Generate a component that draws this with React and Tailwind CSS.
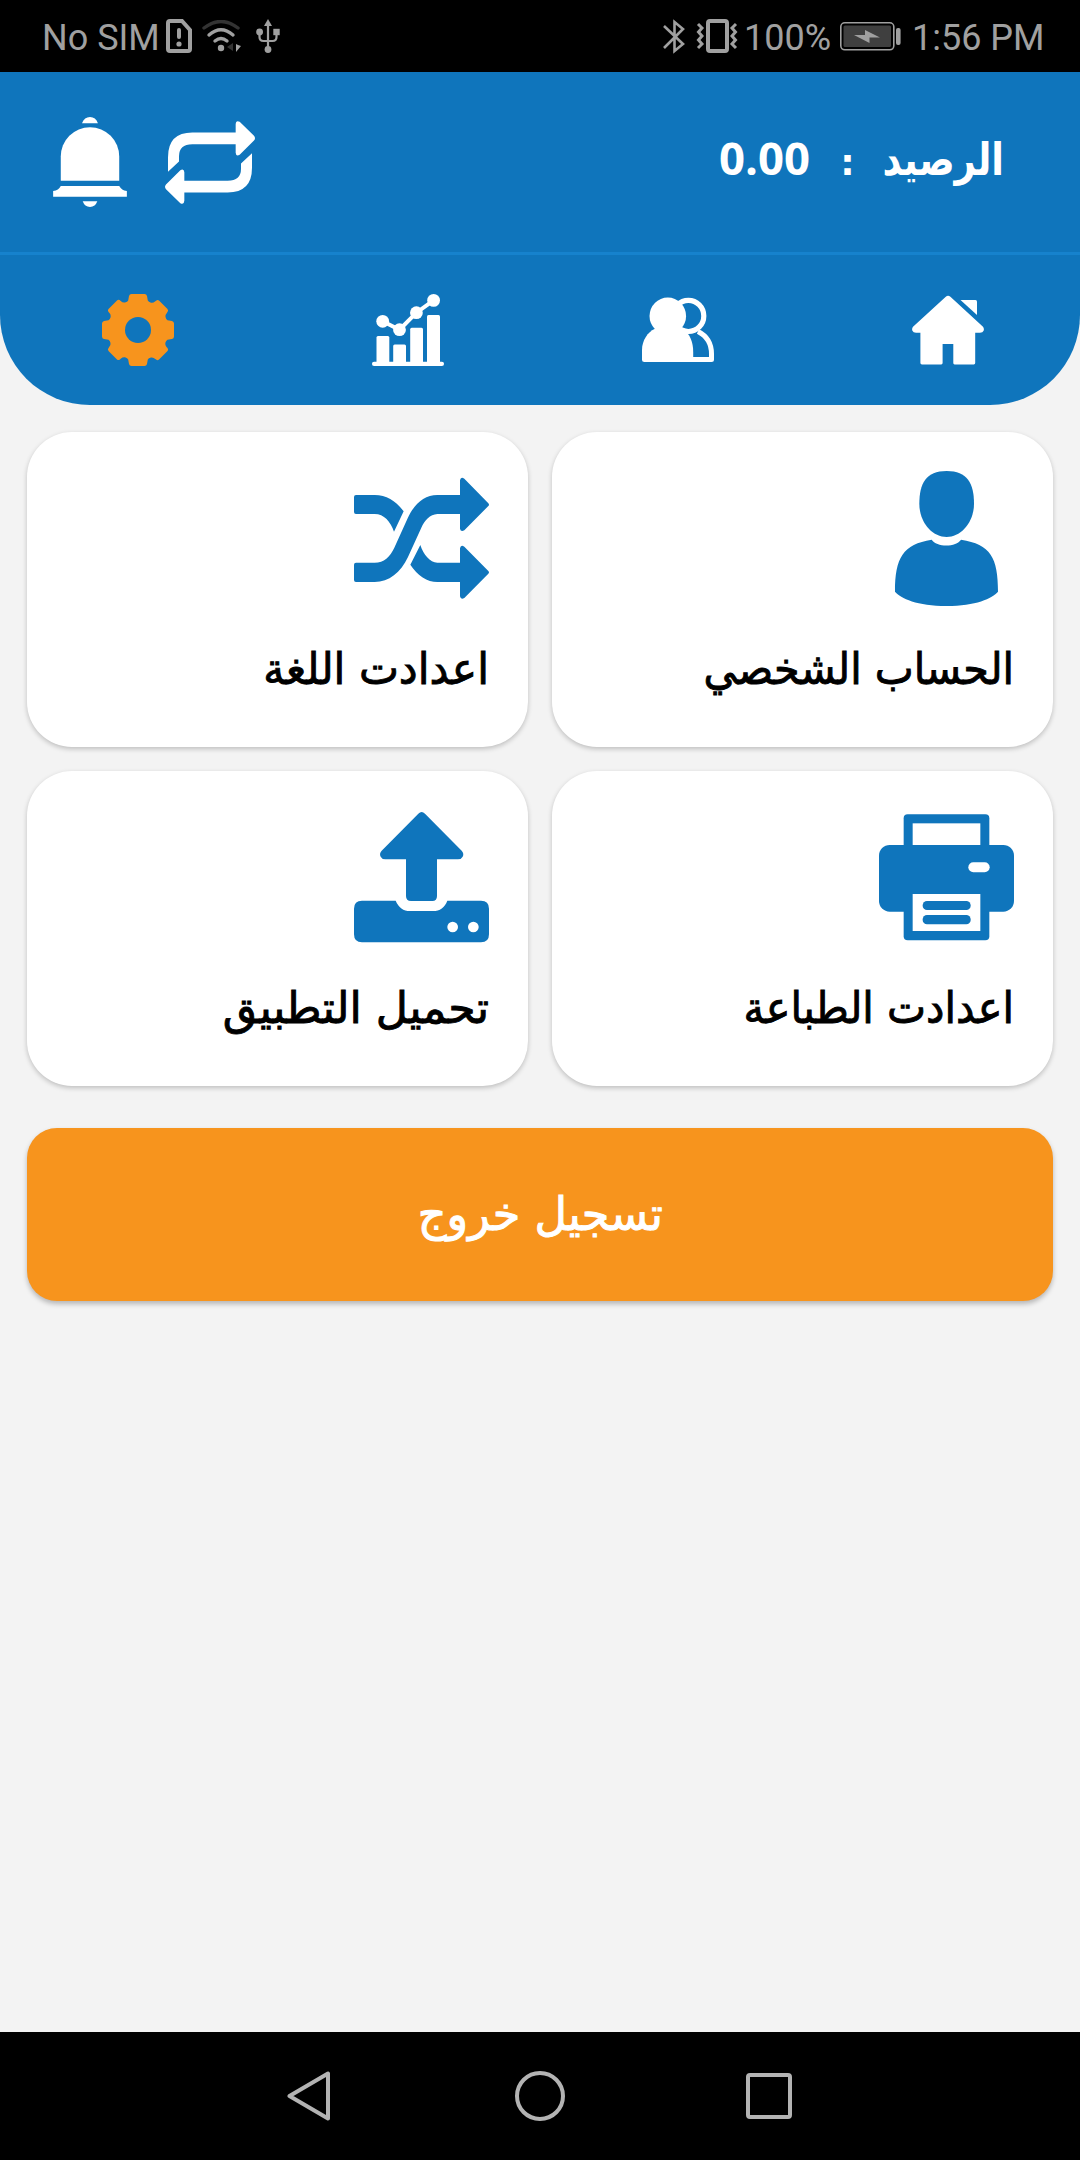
import React from "react";

function BellIcon() {
  return (
    <svg className="w-[74px] h-[90px]" viewBox="0 0 222 271" fill="currentColor">
      <path d="M87 19 Q94 0 111 0 Q128 0 135 19 Z" />
      <path d="M23 192 V119 A88 88 0 0 1 199 119 V192 Z" />
      <path d="M23 208 H199 C205 217 210 222 222 223 V240 H0 V223 C12 222 18 217 23 208 Z" />
      <path d="M89 254 H133 Q127 271 111 271 Q95 271 89 254 Z" />
    </svg>
  );
}

function RepeatIcon() {
  const arrow =
    "M9 152 V108 Q9 34 82 34 H212 V9 Q213 -4 224 2 L267 44 Q273 51 267 58 L224 101 Q213 107 212 95 V69 H82 Q42 69 42 105 V121 Z";
  return (
    <svg className="w-[90px] h-[83px]" viewBox="0 0 270 248" fill="currentColor">
      <path d={arrow} />
      <path d={arrow} transform="rotate(180 135 124)" />
    </svg>
  );
}

function GearIcon() {
  const quarter =
    "M36 36 V0 H42.5 Q44.5 0 45 2 L45.8 6.5 Q46.5 8 49 8.7 Q51.5 9 53 7.5 Q55.3 5 57 6.5 L65.5 15 Q67 16.7 65 18.7 Q63 20.8 63.5 23 Q64 25.5 65.5 26.2 L70 27 Q72 27.5 72 29.5 V36 Z";
  return (
    <svg className="w-[72px] h-[72px]" viewBox="0 0 72 72" fill="currentColor">
      {[0, 90, 180, 270].map((deg) => (
        <path key={deg} d={quarter} transform={`rotate(${deg} 36 36)`} />
      ))}
      <circle cx="36" cy="36" r="13" fill="#0f75bc" />
    </svg>
  );
}

function ChartIcon() {
  return (
    <svg className="w-[72px] h-[72px]" viewBox="0 0 72 72" fill="currentColor">
      <rect x="4.5" y="42" width="12.8" height="28" rx="1.5" />
      <rect x="21.2" y="50.5" width="12.8" height="20" rx="1.5" />
      <rect x="38.2" y="33.7" width="12.8" height="36" rx="1.5" />
      <rect x="55" y="21" width="13" height="49" rx="1.5" />
      <rect x="0" y="67.7" width="72" height="4.3" rx="2.1" />
      <path d="M10.7 27.3 L27.5 35.7 L44.4 18.7 L61.6 6.4" fill="none" stroke="currentColor" strokeWidth="4" />
      <circle cx="10.7" cy="27.3" r="6.4" />
      <circle cx="27.5" cy="35.7" r="6.4" />
      <circle cx="44.4" cy="18.7" r="6.4" />
      <circle cx="61.6" cy="6.4" r="6.4" />
    </svg>
  );
}

function UsersIcon() {
  return (
    <svg className="w-[72px] h-[72px]" viewBox="0 0 72 72" fill="currentColor">
      <ellipse cx="46.4" cy="21.9" rx="15.4" ry="15.6" fill="none" stroke="currentColor" strokeWidth="5.2" />
      <path d="M56 37.5 C65 42 69.5 50 69.5 60 V65.5 H50" fill="none" stroke="currentColor" strokeWidth="5" strokeLinejoin="round" />
      <ellipse cx="25.8" cy="22" rx="18.3" ry="18.4" />
      <path d="M0 65.5 V56 C0 46 6 38 12.5 35 L25 31 L41 35 C48 40 51.2 48 51.2 58 V68 H2.5 Q0 68 0 65.5 Z" />
    </svg>
  );
}

function HomeIcon() {
  return (
    <svg className="w-[72px] h-[72px]" viewBox="0 0 72 72" fill="currentColor">
      <path d="M33.8 2.8 Q36 0.6 38.4 2.8 L71 32.8 Q72.4 34.5 71.6 36.8 Q70.8 38.7 68 38.7 H63.2 V69 Q63.2 70.4 61.8 70.4 H42.6 Q41.3 70.4 41.3 69 V50 H30.6 V69 Q30.6 70.4 29.2 70.4 H10 Q8.4 70.4 8.4 69 V38.7 H4 Q1.2 38.7 0.4 36.8 Q-0.4 34.5 1 32.8 Z" />
      <path d="M48.5 6 H63.5 Q65 6 65 7.5 V21 Z" />
    </svg>
  );
}

function AccountIcon() {
  return (
    <svg className="w-[135px] h-[135px]" viewBox="0 0 405 405" fill="currentColor">
      <path d="M203 0 C265 0 285 38 285 98 C285 155 245 198 203 198 C160 198 121 155 121 98 C121 38 141 0 203 0 Z" />
      <path d="M158 206 C172 229 232 229 246 206 C335 220 357 260 357 362 C340 382 290 405 203 405 C115 405 65 382 48 362 C48 260 72 220 158 206 Z" />
    </svg>
  );
}

function ShuffleIcon() {
  return (
    <svg className="w-[135px] h-[135px]" viewBox="0 0 405 405" fill="currentColor">
      <path d="M0 78 Q0 72 6 72 H62 C98 72 127 91 149 121 L120 182 C110 152 90 129 62 129 H6 Q0 129 0 123 Z" />
      <path d="M0 281 Q0 275 6 275 H62 C90 275 108 258 121 230 L161 142 C180 100 210 72 250 72 H318 V28 Q320 16 331 23 L403 97 Q407 101 403 105 L331 178 Q320 184 318 173 V129 H250 C228 130 212 148 202 170 L162 258 C140 305 105 333 62 333 H6 Q0 333 0 327 Z" />
      <path d="M199 222 C208 250 228 275 250 275 H318 V232 Q320 220 331 227 L403 300 Q407 304 403 308 L331 381 Q320 387 318 376 V333 H250 C220 333 190 313 169 281 Z" />
    </svg>
  );
}

function PrinterIcon() {
  return (
    <svg className="w-[135px] h-[135px]" viewBox="0 0 405 405" fill="currentColor">
      <rect x="74" y="13" width="257" height="378" rx="12" />
      <rect x="101" y="40" width="203" height="65" fill="#fff" />
      <rect x="0" y="105" width="405" height="200" rx="32" />
      <rect x="268" y="157" width="64" height="30" rx="15" fill="#fff" />
      <rect x="101" y="252" width="203" height="111" fill="#fff" />
      <rect x="131" y="273" width="144" height="27" rx="13" />
      <rect x="131" y="315" width="144" height="28" rx="13" />
    </svg>
  );
}

function UploadIcon() {
  return (
    <svg className="w-[135px] h-[135px]" viewBox="0 0 405 405" fill="currentColor">
      <path d="M193 11 Q203 1 213 11 L323 122 Q331 131 326 140 Q322 148 312 148 H249 V258 Q249 273 235 273 H171 Q156 273 156 258 V148 H94 Q84 148 80 140 Q75 131 83 122 Z" />
      <path d="M24 272 H125 C134 293 148 303 168 303 H237 C258 303 272 293 280 272 H381 Q405 272 405 296 V373 Q405 397 381 397 H24 Q0 397 0 373 V296 Q0 272 24 272 Z" />
      <circle cx="296" cy="351" r="16" fill="#fff" />
      <circle cx="358" cy="351" r="16" fill="#fff" />
    </svg>
  );
}

function StatusBar() {
  return (
    <div className="h-[72px] bg-black text-[#a0a0a0] flex items-center justify-between pl-[42px] pr-[36px] font-['Roboto',sans-serif] text-[36px]">
      <div className="flex items-center">
        <span className="w-[124px] whitespace-nowrap leading-[72px] pt-[3px]">No SIM</span>
        <svg className="w-[26px] h-[34px]" viewBox="0 0 26 34" fill="none" stroke="currentColor" strokeWidth="4">
          <path d="M4 2 H16 L24 11 V30 Q24 32 22 32 H4 Q2 32 2 30 V4 Q2 2 4 2 Z" />
          <path d="M13 11 V18" strokeLinecap="round" />
          <circle cx="13" cy="25" r="2.6" fill="currentColor" stroke="none" />
        </svg>
        <svg className="w-[40px] h-[32px] ml-[10px]" viewBox="0 0 40 32" fill="none" stroke="currentColor" strokeWidth="3.4" strokeLinecap="round">
          <path d="M2 8 Q19 -5 36 8" stroke="#333" />
          <path d="M7 15 Q19 4.500 31 15" />
          <path d="M13 21 Q19 16 25 21" />
          <circle cx="19" cy="28" r="3.2" fill="currentColor" stroke="none" />
          <path d="M31 23 V31 L25 27 Z" fill="#333" stroke="none" />
          <path d="M34 24 V32 L39 26 L36 25 Z" fill="currentColor" stroke="none" />
        </svg>
        <svg className="w-[24px] h-[34px] ml-[14px]" viewBox="0 0 24 34" fill="none" stroke="currentColor" strokeWidth="2.2">
          <path d="M12 4 V30 M3.500 13 V18 Q3.500 22 7.500 22 H16.500 Q20.500 22 20.500 18 V13" />
          <path d="M12 0 L16 7 H8 Z" fill="currentColor" stroke="none" />
          <circle cx="3.600" cy="13" r="3.400" fill="currentColor" stroke="none" />
          <rect x="17.300" y="9.800" width="6.400" height="6.400" fill="currentColor" stroke="none" />
          <circle cx="12" cy="30.500" r="3.400" fill="currentColor" stroke="none" />
        </svg>
      </div>
      <div className="flex items-center">
        <svg className="w-[22px] h-[35px]" viewBox="0 0 22 35" fill="none" stroke="currentColor" strokeWidth="2.6">
          <path d="M1 7 L20 25 L11.500 32 V3 L20 10 L1 29" />
        </svg>
        <svg className="w-[42px] h-[34px] ml-[11px]" viewBox="0 0 42 34" fill="none" stroke="currentColor">
          <rect x="12" y="2" width="19" height="30" rx="2" strokeWidth="4" />
          <path d="M2 5 L6 9 L2.500 13 L6 17 L2.500 21 L6 25 L2 29 M40 5 L36 9 L39.500 13 L36 17 L39.500 21 L36 25 L40 29" strokeWidth="3" />
        </svg>
        <span className="w-[94px] pl-[6px] whitespace-nowrap leading-[72px] pt-[3px]">100%</span>
        <svg className="w-[61px] h-[29px] ml-[8px]" viewBox="0 0 61 29">
          <rect x="0.800" y="0.800" width="53" height="27" rx="4" fill="none" stroke="currentColor" strokeWidth="1.600" />
          <rect x="3.500" y="3.500" width="47.500" height="21.500" rx="1.500" fill="#3f3f3f" />
          <path d="M14 13 H25 V8 L40 15.500 H29.500 V21 Z" fill="currentColor" />
          <rect x="56" y="6" width="4.600" height="17" rx="2" fill="currentColor" />
        </svg>
        <span className="w-[132px] ml-[11px] whitespace-nowrap leading-[72px] pt-[3px]">1:56 PM</span>
      </div>
    </div>
  );
}

function Header() {
  return (
    <header className="bg-[#0f75bc] text-white rounded-b-[90px]">
      <div className="h-[180px] pl-[53px] pr-[76px] flex items-start justify-between">
        <div className="flex items-start">
          <div className="pt-[45px]">
            <BellIcon />
          </div>
          <div className="pt-[49px] ml-[38px]">
            <RepeatIcon />
          </div>
        </div>
        <div dir="rtl" className="flex items-baseline pt-[54px] font-['DejaVu_Sans',sans-serif] font-bold text-[45px] leading-[62px]">
          <span className="w-[119px] whitespace-nowrap origin-right scale-x-[0.82]">الرصيد</span>
          <span className="w-[75px] text-center text-[36px]">:</span>
          <span className="w-[89px] whitespace-nowrap font-['Open_Sans',sans-serif] text-[45.5px]">0.00</span>
        </div>
      </div>
      <nav className="h-[153px] border-t-[3px] border-[#1682cd] flex justify-between pl-[102px] pr-[96px] pt-[39px]">
        <span className="text-[#f7941d]">
          <GearIcon />
        </span>
        <ChartIcon />
        <UsersIcon />
        <HomeIcon />
      </nav>
    </header>
  );
}

const cards = [
  { label: "الحساب الشخصي", Icon: AccountIcon, fit: "scale-x-[0.94]" },
  { label: "اعدادت اللغة", Icon: ShuffleIcon, fit: "scale-x-[0.965]" },
  { label: "اعدادت الطباعة", Icon: PrinterIcon, fit: "scale-x-[0.942]" },
  { label: "تحميل التطبيق", Icon: UploadIcon, fit: "scale-x-[1.005]" },
];

function Card({ label, Icon, fit }) {
  return (
    <div className="h-[315px] bg-white rounded-[45px] p-[39px] shadow-[0_2px_5px_rgba(0,0,0,0.22)]">
      <div className="text-[#0f75bc]">
        <Icon />
      </div>
      <p
        className={`mt-[28px] text-[44px] leading-[70px] text-black whitespace-nowrap origin-right [-webkit-text-stroke:0.9px_black] ${fit}`}
      >
        {label}
      </p>
    </div>
  );
}

function NavigationBar() {
  return (
    <div className="h-[128px] bg-black flex items-center justify-between pl-[287px] pr-[288px]">
      <svg className="w-[46px] h-[50px]" viewBox="0 0 46 50" fill="none" stroke="#b3b3b3" strokeWidth="4" strokeLinejoin="round">
        <path d="M41 2.500 V47.500 L2.500 25 Z" />
      </svg>
      <div className="w-[50px] h-[50px] border-4 border-[#b3b3b3] rounded-full" />
      <div className="w-[46px] h-[46px] border-4 border-[#b3b3b3] rounded-[4px]" />
    </div>
  );
}

export default function App() {
  return (
    <div className="w-[1080px] h-[2160px] bg-[#f3f3f3] flex flex-col">
      <StatusBar />
      <Header />
      <main dir="rtl" className="flex-1 px-[27px] pt-[27px] font-['DejaVu_Sans',sans-serif]">
        <div className="grid grid-cols-2 gap-6">
          {cards.map((card) => (
            <Card key={card.label} label={card.label} Icon={card.Icon} fit={card.fit} />
          ))}
        </div>
        <button className="mt-[42px] w-full h-[173px] rounded-[30px] bg-[#f7941d] text-white text-[46px] shadow-[0_3px_5px_rgba(0,0,0,0.25)]">
          <span className="inline-block scale-x-[0.97] [-webkit-text-stroke:1px_white]">تسجيل خروج</span>
        </button>
      </main>
      <NavigationBar />
    </div>
  );
}
